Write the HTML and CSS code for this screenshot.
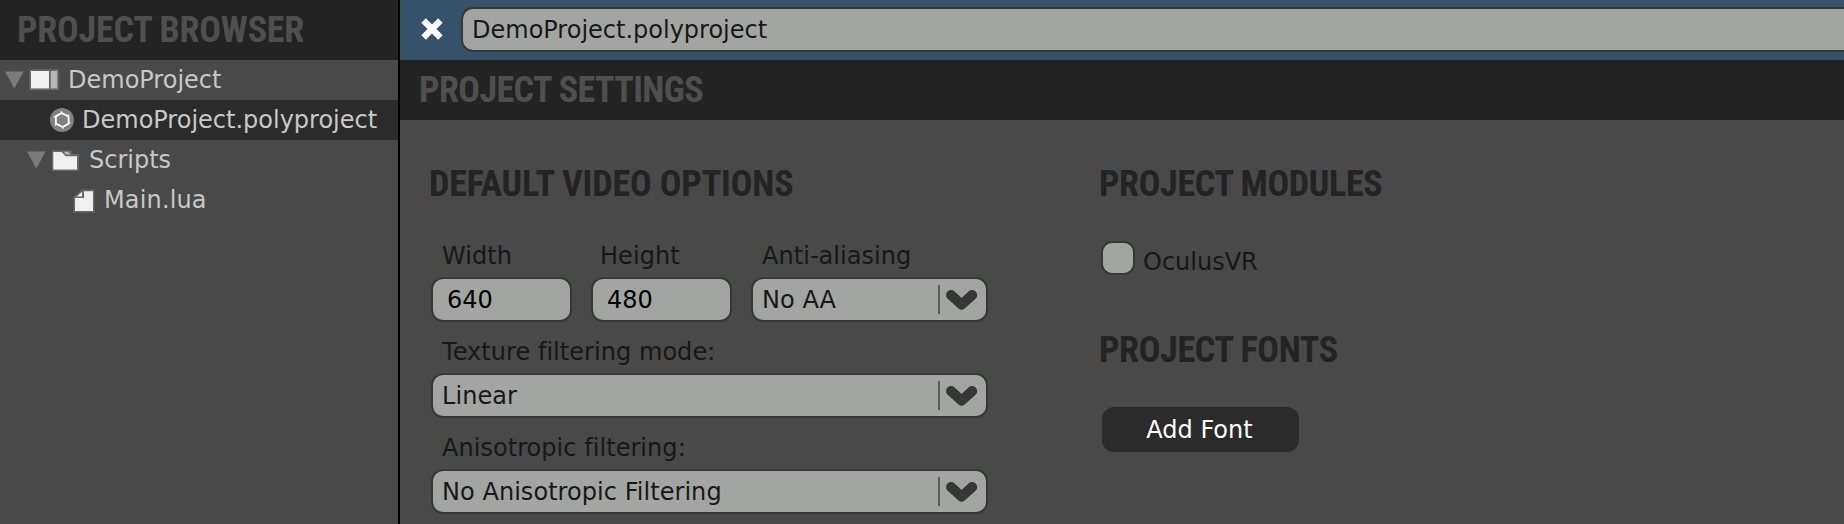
FILE: index.html
```
<!DOCTYPE html>
<html lang="en">
<head>
<meta charset="utf-8">
<title>DemoProject.polyproject</title>
<link rel="stylesheet" href="styles.css">
</head>
<body>
<div class="app">
  <aside class="browser">
    <header class="bar bar-browser"><h1 class="title">PROJECT BROWSER</h1></header>
    <div class="row row-root">
      <svg class="arrow" width="20" height="18"><path d="M0 0.5H18.6L9.3 17.5Z"/></svg>
      <svg class="icon-project" width="31" height="22"><rect class="edge" x="0.3" y="0.3" width="29.5" height="20.7"/><rect class="paper" x="2" y="2" width="18" height="17.4"/><rect class="side" x="21.8" y="2" width="6.5" height="17.4"/></svg>
      <span>DemoProject</span>
    </div>
    <div class="row row-file selected">
      <svg class="icon-poly" width="24" height="24" viewBox="0 0 24 24"><circle cx="12" cy="12" r="12"/><path d="M11.8 5L18.6 8.6V15.7L12.8 19L5.8 15.6V8.4Z"/><path class="tips" d="M11.5 5L11.2 3M5.8 8.4L3.6 9M6 15L5.4 17.8M12.8 18.5L13.2 20.8M18.4 15.5L20.6 14.6M18.2 8.8L18.6 6.2"/></svg>
      <span>DemoProject.polyproject</span>
    </div>
    <div class="row row-folder">
      <svg class="arrow" width="20" height="18"><path d="M0 0.5H18.6L9.3 17.5Z"/></svg>
      <svg class="icon-folder" width="28" height="22"><path class="edge" d="M0 0.5H19.5V4H27V21H0Z"/><path class="side" d="M12 1.8H16.5L18 4.5H13.5Z"/><path class="paper" d="M1.3 2H9.6L13.6 6.3H25V19.5H1.3Z"/></svg>
      <span>Scripts</span>
    </div>
    <div class="row row-script">
      <svg class="icon-script" width="22" height="24"><path class="edge" d="M9 0.5H21.5V23.5H0.5V8.5Z"/><path class="paper" d="M11 2.2H20V22H2V9H11Z"/><path class="paper" d="M9 2.8V7.4H3.8Z"/></svg>
      <span class="wider">Main.lua</span>
    </div>
  </aside>
  <main class="editor">
    <div class="tabbar">
      <svg class="close" width="22" height="22"><path d="M2.6 2.6L19.4 19.4M19.4 2.6L2.6 19.4"/></svg>
      <div class="field tab-field">DemoProject.polyproject</div>
    </div>
    <header class="bar bar-settings"><h1 class="title">PROJECT SETTINGS</h1></header>
    <div class="settings">
      <section class="video">
        <h2 class="title">DEFAULT VIDEO OPTIONS</h2>
        <div class="options">
          <div class="group"><label>Width</label><div class="field number">640</div></div>
          <div class="group height"><label>Height</label><div class="field number">480</div></div>
          <div class="group"><label>Anti-aliasing</label>
            <div class="field combo">No AA<svg class="drop" width="42" height="30"><path class="rule" d="M1 0V29"/><path class="chevron" d="M13 10L23.6 19.6L34.2 10"/></svg></div></div>
          <div class="group wide"><label>Texture filtering mode:</label>
            <div class="field combo">Linear<svg class="drop" width="42" height="30"><path class="rule" d="M1 0V29"/><path class="chevron" d="M13 10L23.6 19.6L34.2 10"/></svg></div></div>
          <div class="group wide"><label>Anisotropic filtering:</label>
            <div class="field combo">No Anisotropic Filtering<svg class="drop" width="42" height="30"><path class="rule" d="M1 0V29"/><path class="chevron" d="M13 10L23.6 19.6L34.2 10"/></svg></div></div>
        </div>
      </section>
      <section class="modules">
        <h2 class="title">PROJECT MODULES</h2>
        <div class="module"><span class="check"></span><span class="module-name">OculusVR</span></div>
        <h2 class="title">PROJECT FONTS</h2>
        <div class="button">Add Font</div>
      </section>
    </div>
  </main>
</div>
</body>
</html>
```
FILE: styles.css
```
* { box-sizing: border-box; }
body {
  margin: 0;
  background: #494949;
  font: 24px/28px "DejaVu Sans", sans-serif;
  font-variant-ligatures: none;
  color: #181818;
  white-space: nowrap;
  overflow: hidden;
}
svg { display: block; flex: none; }
.app { display: flex; height: 524px; }
.browser { width: 400px; flex: none; border-right: 2px solid #000; color: #c8c8c8; }
.editor { flex: 1; min-width: 0; }

.bar { height: 60px; display: flex; align-items: center; background: #232323; color: #4f4f4f; }
.bar-browser { padding-left: 17px; }
.bar-settings { padding-left: 19px; }
.title { margin: 0; font: bold 36px/42px "Roboto Condensed", Roboto, sans-serif; font-stretch: condensed; }
.bar-browser .title { letter-spacing: -0.2px; }
.bar-settings .title { letter-spacing: -0.57px; }
.video .title { letter-spacing: -0.12px; }
.modules .title { letter-spacing: -0.34px; }

.row { height: 40px; display: flex; align-items: center; }
.selected { background: #2b2b2b; }
.row-root { padding-left: 5px; }
.row-file { padding-left: 50px; }
.row-folder { padding-left: 27px; }
.row-script { padding-left: 73px; }
.arrow path { fill: #7b7b7b; }
.edge { fill: #696969; }
.paper { fill: #f0f0f0; }
.side { fill: #b4b4b4; }
.icon-project { margin: 0 8px 0 4px; }
.icon-poly { margin-right: 8px; }
.icon-poly circle { fill: #7f7f7f; }
.icon-poly path { fill: none; stroke: #fff; stroke-width: 1.9; }
.icon-poly .tips { stroke: #eee6de; stroke-width: 1.3; }
.icon-folder { margin: 2px 9px 0 5px; }
.icon-script { margin: 1px 9px 0 0; }
.wider { letter-spacing: 0.15px; }

.tabbar { height: 60px; padding: 7px 0 0 21px; display: flex; background: #36526b; }
.close { margin-top: 11px; }
.close path { stroke: #fff; stroke-width: 6.4; }
.field {
  height: 45px;
  padding: 7px 0 0 9px;
  display: flex;
  border: 2px solid #373737;
  border-radius: 12px;
  background: #a3a5a3;
}
.tab-field { flex: 1; margin-left: 18px; border-right: 0; border-radius: 12px 0 0 12px; }

.settings { padding: 43px 0 0 29px; display: flex; color: #181818; }
.settings .title { color: #232323; }
.video { width: 670px; }
.options {
  width: 557px;
  margin: 37px 0 0 2px;
  display: grid;
  grid-template-columns: 141px 141px 237px;
  column-gap: 19px;
  row-gap: 16px;
}
.group label { display: block; padding-left: 11px; margin-bottom: 7px; letter-spacing: 0.05px; }
.height label { padding-left: 9px; }
.wide { grid-column: 1 / -1; }
.number { padding-left: 14px; color: #000; }
.combo { justify-content: space-between; letter-spacing: 0.05px; }
.drop { margin-top: -1px; margin-right: 6px; }
.rule { stroke: #5c5c5c; stroke-width: 2; }
.chevron { fill: none; stroke: #373737; stroke-width: 10; stroke-linecap: round; stroke-linejoin: round; }
.module { display: flex; margin: 36px 0 54px 2px; }
.check { width: 34px; height: 34px; border: 2px solid #373737; border-radius: 11px; background: #a3a5a3; }
.module-name { margin: 7px 0 0 8px; height: 27px; }
.button {
  width: 197px;
  height: 45px;
  margin: 36px 0 0 3px;
  padding: 9px 2px 0 0;
  border-radius: 12px;
  background: #2b2b2b;
  color: #fff;
  text-align: center;
}
```
